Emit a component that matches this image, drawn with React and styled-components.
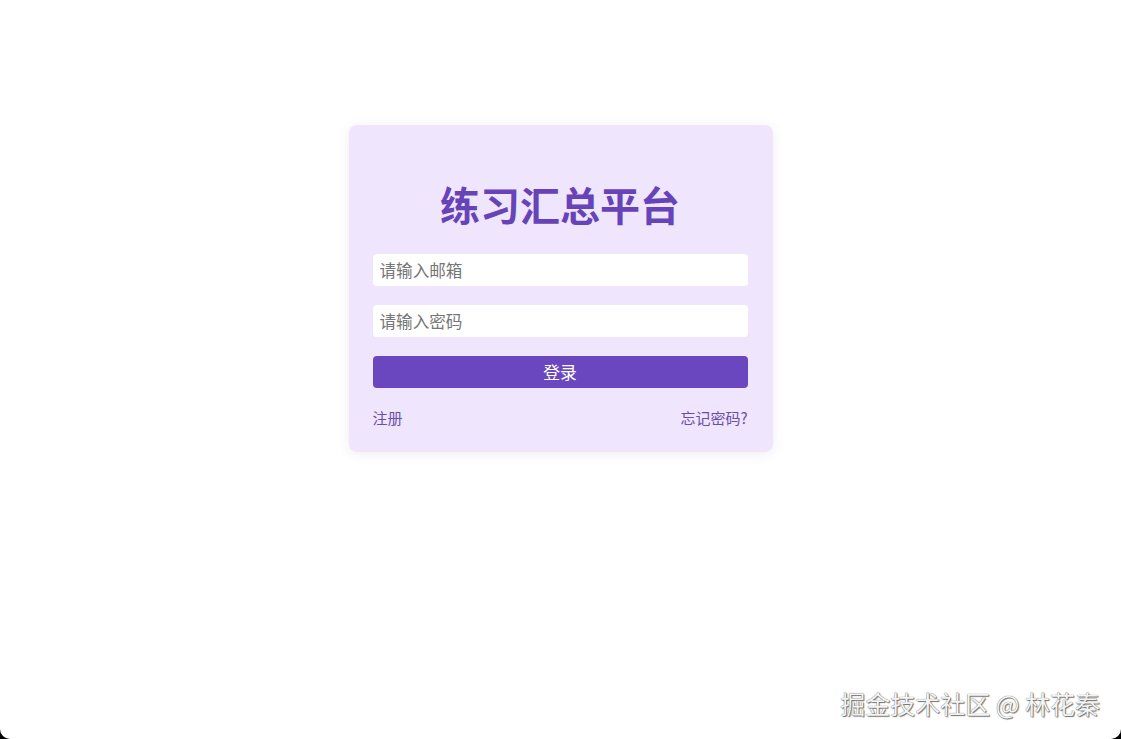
import React from 'react'
import styled, { createGlobalStyle } from 'styled-components';

const GlobalStyle = createGlobalStyle`
  html, body {
    margin: 0;
    padding: 0;
    background: #000;
  }
  #root {
    min-height: 100vh;
    display: flex;
  }
`;

const Page = styled.div`
  flex: 1;
  min-height: 739px;
  background-color: #fff;
  border-radius: 0 0 10px 10px;
  display: flex;
  flex-direction: column;
  align-items: center;
  padding-top: 125px;
  box-sizing: border-box;
  font-family: "Noto Sans CJK SC", "Noto Sans", sans-serif;
`;

const Card = styled.div`
  width: 424px;
  box-sizing: border-box;
  padding: 50px 25px 24px 24px;
  background-color: #efe5fd;
  border-radius: 8px;
  box-shadow: 0 2px 12px rgba(120, 100, 150, 0.12);
  display: flex;
  flex-direction: column;
`;

const Title = styled.h1`
  margin: 0 0 21px;
  font-size: 40px;
  line-height: 58px;
  font-weight: 700;
  text-align: center;
  color: #6743b8;
`;

const Input = styled.input`
  height: 32px;
  border: none;
  outline: none;
  border-radius: 4px;
  background: #fff;
  padding: 0 7px;
  margin-bottom: 19px;
  font-family: inherit;
  font-size: 16.6px;
  color: #333;

  &::placeholder {
    color: #767676;
  }
`;

const Button = styled.button`
  height: 32px;
  border: none;
  border-radius: 4px;
  background-color: #6b47bf;
  color: #fff;
  font-family: inherit;
  font-size: 16.8px;
  cursor: pointer;
  margin-bottom: 20px;
`;

const Links = styled.div`
  display: flex;
  justify-content: space-between;
  font-size: 15px;
  line-height: 20px;
`;

const Link = styled.a`
  color: #6a4fa8;
  text-decoration: none;
  cursor: pointer;
`;

const Footer = styled.div`
  margin-top: auto;
  align-self: flex-end;
  padding: 0 21px 19px 0;
  font-size: 25px;
  line-height: 34px;
  color: #f4f4f4;
  text-shadow: 0 0 1px #444, 1px 1px 1px #777;
`;

const App = () => {
  return (
    <>
      <GlobalStyle />
      <Page>
        <Card>
          <Title>练习汇总平台</Title>
          <Input placeholder="请输入邮箱" />
          <Input type="password" placeholder="请输入密码" />
          <Button>登录</Button>
          <Links>
            <Link>注册</Link>
            <Link>忘记密码?</Link>
          </Links>
        </Card>
        <Footer>掘金技术社区 @ 林花秦</Footer>
      </Page>
    </>
  )
}

export default App
